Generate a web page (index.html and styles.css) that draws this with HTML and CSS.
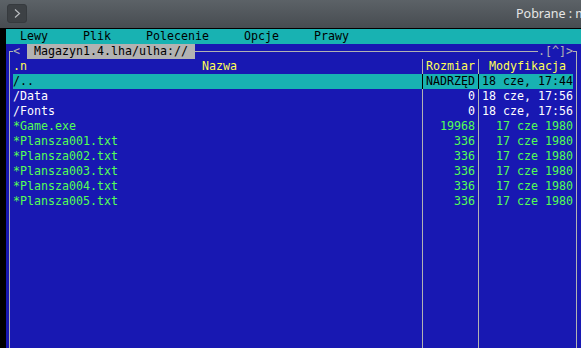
FILE: index.html
```html
<!DOCTYPE html>
<html lang="pl">
<head>
  <meta charset="UTF-8">
  <meta name="viewport" content="width=device-width, initial-scale=1">
  <title>mc</title>
  <link rel="stylesheet" href="styles.css">
</head>
<body>
  <div class="header">
    <div class="btn">
      <svg width="18" height="17" viewBox="0 0 18 17"><polyline points="7,4.5 11.5,8.5 7,12.5" fill="none" stroke="#b9bcbf" stroke-width="1.2"/></svg>
    </div>
    <div class="wintitle">Pobrane : m</div>
  </div>

  <div class="screen">
    <div class="menubar">
      <span>Lewy</span>
      <span>Plik</span>
      <span>Polecenie</span>
      <span>Opcje</span>
      <span>Prawy</span>
    </div>

    <div class="panel">
      <div class="title">
        <div class="title-left"><span class="cell">&lt;</span><span class="cell"> </span><span class="path"> Magazyn1.4.lha/ulha:// </span></div>
        <div class="title-right">.[^]&gt;</div>
      </div>

      <div class="row head">
        <div class="name"><span>.n</span><span class="head-name">Nazwa</span></div>
        <div class="sep"></div>
        <div class="size">Rozmiar</div>
        <div class="sep"></div>
        <div class="date">&nbsp;Modyfikacja</div>
      </div>
      <div class="row selected">
        <div class="name">/..</div>
        <div class="sep"></div>
        <div class="size">NADRZĘD</div>
        <div class="sep"></div>
        <div class="date">18 cze, 17:44</div>
      </div>
      <div class="row dir">
        <div class="name">/Data</div>
        <div class="sep"></div>
        <div class="size">0</div>
        <div class="sep"></div>
        <div class="date">18 cze, 17:56</div>
      </div>
      <div class="row dir">
        <div class="name">/Fonts</div>
        <div class="sep"></div>
        <div class="size">0</div>
        <div class="sep"></div>
        <div class="date">18 cze, 17:56</div>
      </div>
      <div class="row exe">
        <div class="name">*Game.exe</div>
        <div class="sep"></div>
        <div class="size">19968</div>
        <div class="sep"></div>
        <div class="date">  17 cze 1980</div>
      </div>
      <div class="row exe">
        <div class="name">*Plansza001.txt</div>
        <div class="sep"></div>
        <div class="size">336</div>
        <div class="sep"></div>
        <div class="date">  17 cze 1980</div>
      </div>
      <div class="row exe">
        <div class="name">*Plansza002.txt</div>
        <div class="sep"></div>
        <div class="size">336</div>
        <div class="sep"></div>
        <div class="date">  17 cze 1980</div>
      </div>
      <div class="row exe">
        <div class="name">*Plansza003.txt</div>
        <div class="sep"></div>
        <div class="size">336</div>
        <div class="sep"></div>
        <div class="date">  17 cze 1980</div>
      </div>
      <div class="row exe">
        <div class="name">*Plansza004.txt</div>
        <div class="sep"></div>
        <div class="size">336</div>
        <div class="sep"></div>
        <div class="date">  17 cze 1980</div>
      </div>
      <div class="row exe">
        <div class="name">*Plansza005.txt</div>
        <div class="sep"></div>
        <div class="size">336</div>
        <div class="sep"></div>
        <div class="date">  17 cze 1980</div>
      </div>
      <div class="row fill">
        <div class="name"></div>
        <div class="sep"></div>
        <div class="size"></div>
        <div class="sep"></div>
        <div class="date"></div>
      </div>
    </div>
  </div>
</body>
</html>
```

FILE: styles.css
```css
html, body {
  margin: 0;
  height: 348px;
  overflow: hidden;
}
body {
  background: #000;
}
.header {
  height: 28px;
  border-bottom: 1px solid #000;
  background: linear-gradient(#5c6267, #474c51);
  display: flex;
  white-space: nowrap;
  overflow: hidden;
}
.btn {
  width: 18px;
  height: 17px;
  margin: 4px 0 0 7px;
  border: 1px solid #363a3e;
  border-radius: 3px;
  background: #3d4145;
  flex-shrink: 0;
}
.btn svg {
  display: block;
}
.wintitle {
  margin: 5px 0 0 489px;
  font-family: "Noto Sans", sans-serif;
  font-size: 12.5px;
  color: #e6e6e6;
  flex-shrink: 0;
}
.screen {
  margin-left: 6px;
  height: 319px;
  background: #1818b2;
  font-family: "DejaVu Sans Mono", monospace;
  font-size: 11.63px;
  line-height: 15px;
  display: flex;
  flex-direction: column;
  white-space: pre;
}
.menubar {
  height: 15px;
  background: #18b2b2;
  color: #000;
  padding-left: 14px;
  display: flex;
  flex-shrink: 0;
}
.menubar span {
  margin-right: 35px;
}
.panel {
  position: relative;
  margin: 7px 0 0 3px;
  width: 566px;
  flex: 1;
  border: 1px solid #b2b2b2;
  border-bottom: 0;
  padding-top: 7px;
  display: flex;
  flex-direction: column;
}
.title {
  position: absolute;
  top: -8px;
  left: 3px;
  right: 3px;
  height: 15px;
  display: flex;
  justify-content: space-between;
  color: #b2b2b2;
}
.title-left {
  display: flex;
}
.title-left .cell {
  width: 7px;
  background: #1818b2;
}
.path {
  background: #b2b2b2;
  color: #000;
}
.title-right {
  background: #1818b2;
}
.row {
  display: flex;
  height: 15px;
  margin: 0 3px;
  color: #fff;
}
.name {
  width: 406px;
  overflow: hidden;
}
.sep {
  width: 7px;
  background: linear-gradient(#b2b2b2, #b2b2b2) no-repeat 3px 0 / 1px 100%;
}
.size {
  width: 49px;
  text-align: right;
}
.date {
  width: 91px;
}
.head {
  color: #ffff54;
}
.head-name {
  margin-left: 175px;
}
.selected {
  background: #18b2b2;
  color: #000;
}
.selected .sep {
  background: linear-gradient(#000, #000) no-repeat 3px 0 / 1px 100%;
}
.exe {
  color: #54ff54;
}
.fill {
  flex: 1;
  height: auto;
}
```
